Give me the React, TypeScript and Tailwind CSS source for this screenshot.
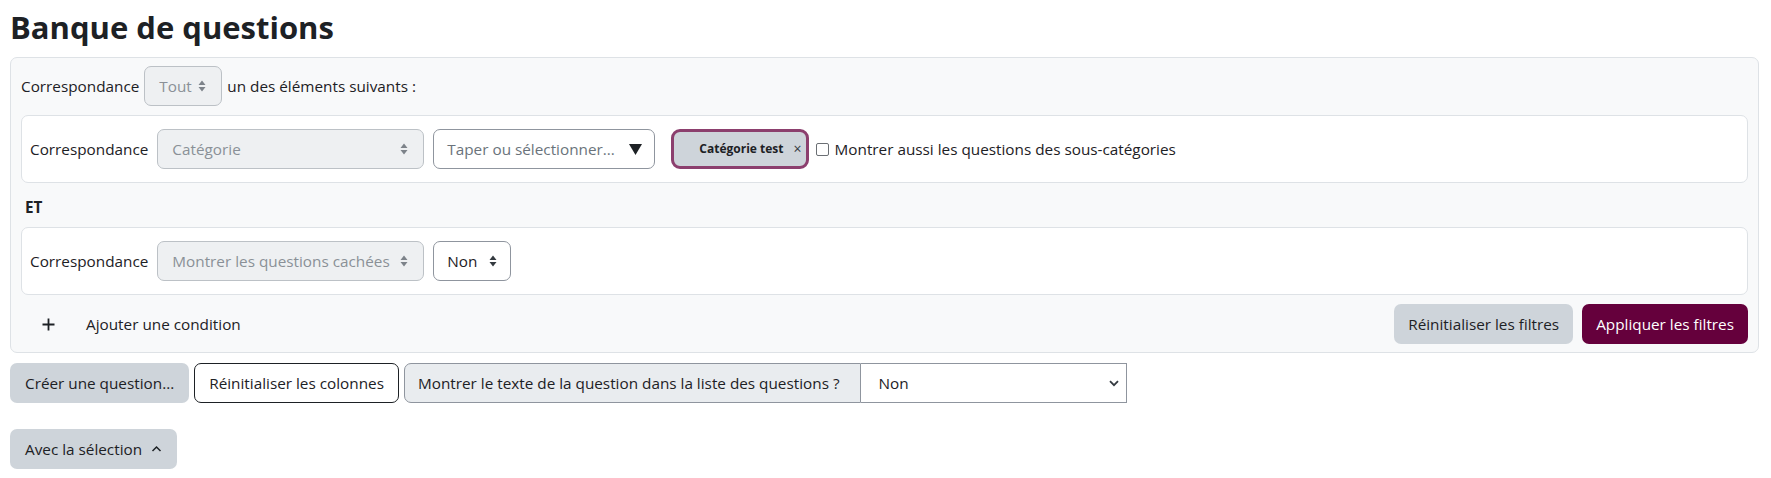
import React from "react";

const FONT = { fontFamily: '"Open Sans", "Noto Sans", sans-serif' };

function SortArrows({ color }: { color: string }) {
  return (
    <svg width="8" height="12" viewBox="0 0 8 12" className="shrink-0">
      <path d="M4 0.5 L7.5 5 H0.5 Z M4 11.5 L0.5 7 H7.5 Z" fill={color} />
    </svg>
  );
}

function DisabledSelect({ label, width }: { label: string; width: string }) {
  return (
    <div
      className={`flex h-[40px] ${width} shrink-0 items-center justify-between rounded-[7px] border border-[#bcc1c6] bg-[#eef0f2] pl-[14px] pr-[15px] text-[#8a9097]`}
    >
      <span>{label}</span>
      <SortArrows color="#7d838a" />
    </div>
  );
}

function Card({ children }: { children: React.ReactNode }) {
  return (
    <div className="flex items-center gap-[9px] rounded-[7px] border border-[#dee2e6] bg-white py-[13px] pl-[8px]">
      {children}
    </div>
  );
}

export default function App() {
  return (
    <div
      style={FONT}
      className="min-h-[478px] bg-white pl-[10px] pr-[12px] pt-[9px] text-[15.3px] leading-[23px] text-[#1d2125]"
    >
      <h1 className="text-[31px] font-bold leading-[36px]">Banque de questions</h1>

      <div className="mt-[12px] flex flex-col rounded-[7px] border border-[#dee2e6] bg-[#f8f9fa] px-[10px] pb-[8px] pt-[8px]">
        {/* Row 1 */}
        <div className="flex h-[40px] items-center gap-[5px]">
          <span>Correspondance</span>
          <DisabledSelect label="Tout" width="w-[78px]" />
          <span>un des éléments suivants :</span>
        </div>

        {/* Card 1 */}
        <div className="mt-[9px]">
          <Card>
            <span>Correspondance</span>
            <DisabledSelect label="Catégorie" width="w-[267px]" />
            <div className="flex h-[40px] w-[222px] shrink-0 items-center justify-between rounded-[7px] border border-[#8f959e] bg-white pl-[13px] pr-[12px] text-[#6a737b]">
              <span>Taper ou sélectionner...</span>
              <svg width="13" height="11" viewBox="0 0 13 11">
                <path d="M0 0 H13 L6.5 11 Z" fill="#1d2125" />
              </svg>
            </div>
            <div className="ml-[7px] flex h-[40px] shrink-0 items-center rounded-[9px] border-[3px] border-[#8c3f6e] bg-[#ced4da] pl-[25px] pr-[4px]">
              <span className="text-[12px] font-bold leading-[16px] text-[#1d2125]">
                Catégorie test
              </span>
              <span className="ml-[10px] text-[14px] leading-[16px] text-[#343a40]">×</span>
            </div>
            <div className="flex items-center gap-[6px]">
              <span className="ml-[-2px] block h-[13px] w-[13px] rounded-[2px] border border-[#6b6f74] bg-white" />
              <span>Montrer aussi les questions des sous-catégories</span>
            </div>
          </Card>
        </div>

        {/* ET */}
        <div className="h-[44px] pl-[4px] pt-[13px] font-bold leading-[23px]">ET</div>

        {/* Card 2 */}
        <Card>
          <span>Correspondance</span>
          <DisabledSelect label="Montrer les questions cachées" width="w-[267px]" />
          <div className="flex h-[40px] w-[78px] shrink-0 items-center justify-between rounded-[7px] border border-[#8f959e] bg-white pl-[13px] pr-[13px]">
            <span>Non</span>
            <SortArrows color="#343a40" />
          </div>
        </Card>

        {/* Bottom row */}
        <div className="mt-[9px] flex h-[40px] items-center">
          <div className="flex items-center">
            <svg width="13" height="13" viewBox="0 0 13 13" className="ml-[21px]">
              <path d="M6.5 0.5 V12.5 M0.5 6.5 H12.5" stroke="#1d2125" strokeWidth="1.8" />
            </svg>
            <span className="ml-[31px]">Ajouter une condition</span>
          </div>
          <div className="ml-auto flex items-center gap-[9px]">
            <button className="flex h-[40px] items-center rounded-[7px] bg-[#ced4da] px-[14px] text-[#1d2125]">
              Réinitialiser les filtres
            </button>
            <button className="flex h-[40px] items-center rounded-[7px] bg-[#65003c] px-[14px] text-white">
              Appliquer les filtres
            </button>
          </div>
        </div>
      </div>

      {/* Below panel */}
      <div className="mt-[10px] flex items-center gap-[5px]">
        <button className="flex h-[40px] items-center rounded-[7px] bg-[#ced4da] px-[15px] text-[#1d2125]">
          Créer une question...
        </button>
        <button className="flex h-[40px] items-center rounded-[7px] border border-[#1d2125] bg-white px-[14px] text-[#1d2125]">
          Réinitialiser les colonnes
        </button>
        <div className="flex h-[40px] items-stretch">
          <div className="flex items-center rounded-l-[7px] border border-[#8f959e] bg-[#e9ecef] pl-[13px] pr-[20px]">
            Montrer le texte de la question dans la liste des questions ?
          </div>
          <div className="flex w-[266px] items-center justify-between border border-l-0 border-[#8f959e] bg-white pl-[18px] pr-[7px]">
            <span>Non</span>
            <svg width="10" height="7" viewBox="0 0 10 7">
              <path d="M1 1.2 L5 5.2 L9 1.2" fill="none" stroke="#343a40" strokeWidth="1.8" />
            </svg>
          </div>
        </div>
      </div>

      <div className="mt-[26px]">
        <button className="flex h-[40px] items-center rounded-[7px] bg-[#ced4da] pl-[15px] pr-[15px] text-[#1d2125]">
          Avec la sélection
          <svg width="11" height="8" viewBox="0 0 11 8" className="ml-[9px]">
            <path d="M1.5 6 L5.5 2 L9.5 6" fill="none" stroke="#1d2125" strokeWidth="1.5" />
          </svg>
        </button>
      </div>
    </div>
  );
}
